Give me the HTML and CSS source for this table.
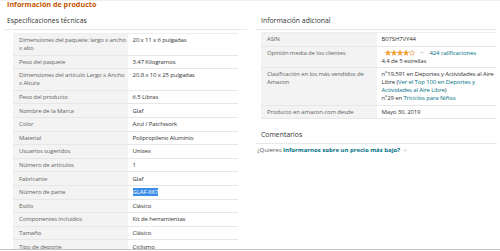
FILE: index.html
```html
<!DOCTYPE html>
<html lang="es">
<head>
<meta charset="utf-8">
<title>Información de producto</title>
<link rel="stylesheet" href="styles.css">
</head>
<body>
<div class="page">
  <h1 class="title">Información de producto</h1>
  <div class="cols">
    <section class="col col-left">
      <h2 class="sec-head">Especificaciones técnicas</h2>
      <table class="spec spec-left">
        <tr><th>Dimensiones del paquete: largo x ancho<br>x alto</th><td>20 x 11 x 6 pulgadas</td></tr>
        <tr><th>Peso del paquete</th><td>3.47 Kilogramos</td></tr>
        <tr><th>Dimensiones del artículo Largo x Ancho<br>x Altura</th><td>20.8 x 10 x 25 pulgadas</td></tr>
        <tr><th>Peso del producto</th><td>6.5 Libras</td></tr>
        <tr><th>Nombre de la Marca</th><td>Glaf</td></tr>
        <tr><th>Color</th><td>Azul / Patchwork</td></tr>
        <tr><th>Material</th><td>Polipropileno Aluminio</td></tr>
        <tr><th>Usuarios sugeridos</th><td>Unisex</td></tr>
        <tr><th>Número de artículos</th><td>1</td></tr>
        <tr><th>Fabricante</th><td>Glaf</td></tr>
        <tr><th>Número de parte</th><td><span class="sel">GLAF-XX7</span></td></tr>
        <tr><th>Estilo</th><td>Clásico</td></tr>
        <tr><th>Componentes incluidos</th><td>Kit de herramientas</td></tr>
        <tr><th>Tamaño</th><td>Clásico</td></tr>
        <tr><th>Tipo de deporte</th><td>Ciclismo</td></tr>
      </table>
    </section>
    <section class="col col-right">
      <h2 class="sec-head sec-head-r">Información adicional</h2>
      <table class="spec spec-right">
        <tr><th>ASIN</th><td>B07SH7VY44</td></tr>
        <tr>
          <th>Opinión media de los clientes</th>
          <td>
            <div class="rating">
              <svg class="stars" width="30" height="6" viewBox="0 0 30 6">
                <defs>
                  <polygon id="st" points="3,0.1 3.68,2.07 5.85,2.07 4.09,3.36 4.76,5.43 3,4.15 1.24,5.43 1.91,3.36 0.15,2.07 2.32,2.07"/>
                  <clipPath id="half"><rect x="24" y="0" width="3" height="6"/></clipPath>
                </defs>
                <use href="#st" x="0" fill="#ffa41c" stroke="#de7921" stroke-width="0.3"/>
                <use href="#st" x="6" fill="#ffa41c" stroke="#de7921" stroke-width="0.3"/>
                <use href="#st" x="12" fill="#ffa41c" stroke="#de7921" stroke-width="0.3"/>
                <use href="#st" x="18" fill="#ffa41c" stroke="#de7921" stroke-width="0.3"/>
                <use href="#st" x="24" fill="none" stroke="#de7921" stroke-width="0.4"/>
                <use href="#st" x="24" fill="#ffa41c" stroke="#de7921" stroke-width="0.3" clip-path="url(#half)"/>
              </svg>
              <svg class="chev" width="4" height="3" viewBox="0 0 4 3"><polyline points="0.5,0.7 2,2.2 3.5,0.7" fill="none" stroke="#999" stroke-width="0.6"/></svg>
              <a class="link" href="#">424 calificaciones</a>
            </div>
            <div>4.4 de 5 estrellas</div>
          </td>
        </tr>
        <tr>
          <th>Clasificación en los más vendidos de<br>Amazon</th>
          <td>nº19,591 en Deportes y Actividades al Aire<br>Libre (<a class="link" href="#">Ver el Top 100 en Deportes y<br>Actividades al Aire Libre</a>)<br>nº29 en <a class="link" href="#">Triciclos para Niños</a></td>
        </tr>
        <tr><th>Producto en amazon.com desde</th><td>Mayo 30, 2019</td></tr>
      </table>
      <h2 class="sec-head sec-head-r sec-comments">Comentarios</h2>
      <p class="feedback">¿Quieres <a class="link strong" href="#">Informarnos sobre un precio más bajo?</a> <svg class="chev" width="4" height="3" viewBox="0 0 4 3"><polyline points="0.5,0.7 2,2.2 3.5,0.7" fill="none" stroke="#999" stroke-width="0.6"/></svg></p>
    </section>
  </div>
</div>
</body>
</html>
```

FILE: styles.css
```css
* { box-sizing: border-box; }

body {
  margin: 0;
  background: #fff;
  font-family: "Open Sans", "Noto Sans", sans-serif;
  color: #333;
}

.page {
  height: 250px;
  overflow: hidden;
  border-top: 1px solid #f0f0f0;
  border-bottom: 1px solid #c4c4c4;
}

.title {
  margin: 0;
  padding-left: 7px;
  font-size: 7.2px;
  line-height: 7px;
  font-weight: 700;
  color: #c45500;
}

.cols {
  display: flex;
}

.col-left {
  width: 242px;
  margin-left: 5px;
}

.col-right {
  flex: 1;
  margin-left: 9px;
  margin-right: 3px;
}

.sec-head {
  margin: 8px 0 0;
  padding: 0 0 3px 2px;
  font-size: 6.9px;
  line-height: 10px;
  font-weight: 400;
  color: #333;
  border-bottom: 1px solid #e7e7e7;
}

.sec-head-r {
  padding-left: 5px;
}

.sec-comments {
  margin-top: 11px;
}

.spec {
  border-collapse: collapse;
  font-size: 6px;
  line-height: 8px;
  letter-spacing: -0.13px;
}

.spec-left {
  width: 225px;
  margin: 3px 0 0 8px;
}

.spec-right {
  width: calc(100% - 5px);
  margin: 2px 0 0 5px;
}

.spec th,
.spec td {
  padding: 2.3px 2px 2.3px 5px;
  text-align: left;
  vertical-align: top;
  border-bottom: 1px solid #e7e7e7;
  white-space: nowrap;
}

.spec th {
  font-weight: 400;
  color: #666;
  background: #f3f3f3;
  padding-left: 6px;
}

.spec-left th { width: 113px; }
.spec-right th { width: 116px; }

.spec td {
  color: #333;
  padding-left: 4.5px;
}

.spec-left tr:first-child th,
.spec-left tr:first-child td,
.spec-right tr:first-child th,
.spec-right tr:first-child td {
  border-top: 1px solid #eee;
}

.sel {
  background: #3b8de8;
  color: #fff;
}

.link {
  color: #007185;
  text-decoration: none;
}

.strong { font-weight: 700; }

.rating {
  display: flex;
  align-items: center;
  height: 8px;
  padding-left: 3px;
}

.stars { display: block; }

.chev {
  display: inline-block;
  margin: 0 6px 0 5px;
  vertical-align: middle;
}

.feedback {
  margin: 2px 0 0;
  padding-left: 1px;
  font-size: 6px;
  line-height: 8px;
  color: #555;
}

.feedback .chev {
  margin: 0 0 0 1px;
}
```
